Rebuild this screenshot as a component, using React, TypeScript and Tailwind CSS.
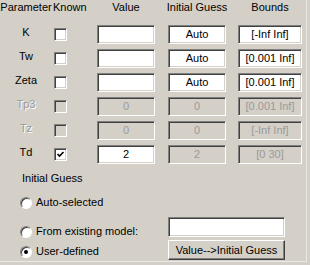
import React from "react";

const sunken =
  "border border-t-[#808080] border-l-[#808080] border-r-white border-b-white shadow-[inset_1px_1px_0_#404040,inset_-1px_-1px_0_#d4d0c8]";

type Row = {
  name: string;
  enabled: boolean;
  known: boolean;
  value: string;
  guess: string;
  bounds: string;
  guessOn: boolean;
};

const rows: Row[] = [
  { name: "K", enabled: true, known: false, value: "", guess: "Auto", bounds: "[-Inf Inf]", guessOn: true },
  { name: "Tw", enabled: true, known: false, value: "", guess: "Auto", bounds: "[0.001 Inf]", guessOn: true },
  { name: "Zeta", enabled: true, known: false, value: "", guess: "Auto", bounds: "[0.001 Inf]", guessOn: true },
  { name: "Tp3", enabled: false, known: false, value: "0", guess: "0", bounds: "[0.001 Inf]", guessOn: false },
  { name: "Tz", enabled: false, known: false, value: "0", guess: "0", bounds: "[-Inf Inf]", guessOn: false },
  { name: "Td", enabled: true, known: true, value: "2", guess: "2", bounds: "[0 30]", guessOn: false },
];

function Edit({ text, on, width }: { text: string; on: boolean; width: string }) {
  return (
    <div
      className={`${sunken} ${width} h-[19px] flex items-center justify-center whitespace-nowrap ${
        on ? "bg-white text-black" : "bg-[#d4d0c8] text-[#9a9a9a]"
      }`}
    >
      {text}
    </div>
  );
}

function Check({ checked, on }: { checked: boolean; on: boolean }) {
  return (
    <div className={`${sunken} w-[13px] h-[13px] mt-[3px] flex items-center justify-center ${on ? "bg-white" : "bg-[#d4d0c8]"}`}>
      {checked && (
        <svg width="9" height="9" viewBox="0 0 9 9">
          <path d="M1.5 4 L3.5 6 L7.5 2" stroke="#000" strokeWidth="1.6" fill="none" />
        </svg>
      )}
    </div>
  );
}

function Radio({ selected }: { selected: boolean }) {
  return (
    <div className="w-[12px] h-[12px] shrink-0 rounded-full border border-t-[#808080] border-l-[#808080] border-r-white border-b-white bg-white shadow-[inset_1px_1px_0_#404040] flex items-center justify-center">
      {selected && <div className="w-[4px] h-[4px] rounded-full bg-black" />}
    </div>
  );
}

export default function App() {
  return (
    <div className="w-[310px] h-[265px] bg-[#d4d0c8] text-[11px] leading-[13px] text-black font-['Liberation_Sans',Arial,sans-serif] overflow-hidden whitespace-nowrap">
      <div className="w-[307px] h-[262px] border-r border-b border-r-[#ebe9e5] border-b-[#ebe9e5]">
        {/* header */}
        <div className="flex pt-[1px]">
          <div className="w-[52px] flex justify-center">Parameter</div>
          <div className="w-[45px] pl-[1px]">Known</div>
          <div className="w-[58px] flex justify-center">Value</div>
          <div className="w-[58px] ml-[13px] flex justify-center">Initial Guess</div>
          <div className="w-[64px] ml-[12px] flex justify-center">Bounds</div>
        </div>

        {/* parameter rows */}
        <div className="flex flex-col gap-[5px] mt-[11px]">
          {rows.map((r) => (
            <div key={r.name} className="flex h-[19px]">
              <div
                className={`w-[52px] text-center pt-[1px] ${
                  r.enabled ? "text-black" : "text-[#9a9a9a] [text-shadow:1px_1px_0_#ffffff]"
                }`}
              >
                {r.name}
              </div>
              <div className="w-[45px] pl-[2px]">
                <Check checked={r.known} on={r.enabled} />
              </div>
              <Edit text={r.value} on={r.enabled} width="w-[58px]" />
              <div className="ml-[13px]">
                <Edit text={r.guess} on={r.guessOn} width="w-[58px]" />
              </div>
              <div className="ml-[12px]">
                <Edit text={r.bounds} on={r.guessOn} width="w-[64px]" />
              </div>
            </div>
          ))}
        </div>

        {/* initial guess */}
        <div className="flex">
          <div className="w-[168px]">
            <div className="pl-[22px] mt-[8px]">Initial Guess</div>
            <div className="flex items-center gap-[4px] pl-[20px] mt-[11px]">
              <Radio selected={false} />
              <span>Auto-selected</span>
            </div>
            <div className="flex items-center gap-[4px] pl-[20px] mt-[16px]">
              <Radio selected={false} />
              <span>From existing model:</span>
            </div>
            <div className="flex items-center gap-[4px] pl-[20px] mt-[7px]">
              <Radio selected={true} />
              <span>User-defined</span>
            </div>
          </div>
          <div className="w-[117px] pt-[53px] flex flex-col gap-[3px]">
            <div className={`${sunken} h-[20px] bg-white`} />
            <button className="h-[20px] border border-t-white border-l-white border-r-[#404040] border-b-[#404040] shadow-[inset_-1px_-1px_0_#808080] bg-[#d4d0c8] flex items-center justify-center">
              Value--&gt;Initial Guess
            </button>
          </div>
        </div>
      </div>
    </div>
  );
}
